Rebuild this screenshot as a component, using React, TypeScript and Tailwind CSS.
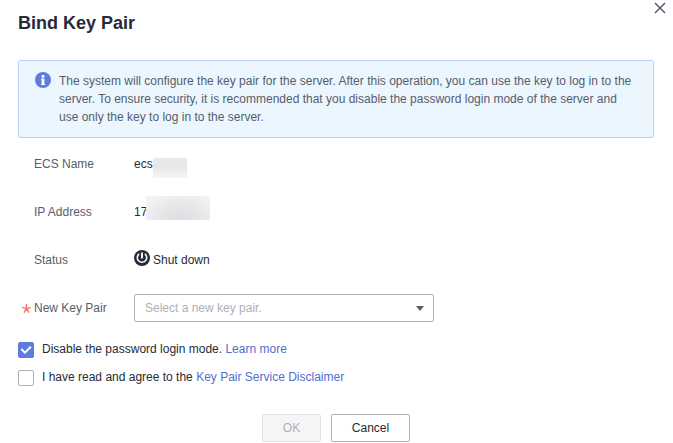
import type { ReactNode } from 'react';

function CloseIcon() {
  return (
    <svg width="12" height="12" viewBox="0 0 12 12" fill="none" stroke="#575d6c" strokeWidth="1.5">
      <path d="M1 1 11 11M11 1 1 11" />
    </svg>
  );
}

function InfoIcon() {
  return (
    <svg className="shrink-0" width="16" height="16" viewBox="0 0 16 16">
      <circle cx="8" cy="8" r="8" fill="#5e7ce0" />
      <circle cx="8" cy="4.2" r="1.5" fill="#fff" />
      <path d="M6 6.5H9.4V12H10V13H6V12H6.6V7.5H6Z" fill="#fff" />
    </svg>
  );
}

function PowerIcon() {
  return (
    <svg className="shrink-0" width="16" height="16" viewBox="0 0 16 16" fill="none">
      <circle cx="8" cy="8" r="8" fill="#252b3a" />
      <path d="M5.2 3.8A4.7 4.7 0 1 0 10.8 3.8" stroke="#fff" strokeWidth="1.5" />
      <path d="M8 2.6V8.4" stroke="#fff" strokeWidth="1.9" />
    </svg>
  );
}

function Row({ label, required, children }: { label: string; required?: boolean; children: ReactNode }) {
  return (
    <div className="flex h-12 items-center">
      <div className="flex w-[116px] shrink-0 items-center text-[#575d6c]">
        <span className="flex w-4 justify-end pr-[3.5px]">
          {required && (
            <svg width="9" height="9" viewBox="0 0 9 9" stroke="#f66f6a" strokeWidth="1.4" fill="none">
              <path d="M4.5 0V4.8M0.3 3.4 4.5 4.8 8.7 3.4M1.9 8.6 4.5 4.8 7.1 8.6" />
            </svg>
          )}
        </span>
        {label}
      </div>
      {children}
    </div>
  );
}

function Check({ checked, children }: { checked?: boolean; children: ReactNode }) {
  return (
    <label className="flex h-7 items-center">
      <span className={`mt-0.5 mr-2 flex size-4 shrink-0 items-center justify-center rounded-xs border ${checked ? 'border-[#5e7ce0] bg-[#5e7ce0]' : 'border-[#adb0b8] bg-white'}`}>
        {checked && (
          <svg className="shrink-0" width="12" height="10" viewBox="0 0 12 10" fill="none" stroke="#fff" strokeWidth="2">
            <path d="M1.3 4 4.9 7.7 10.9 1.7" />
          </svg>
        )}
      </span>
      <span>{children}</span>
    </label>
  );
}

export default function App() {
  return (
    <div className="h-[443px] w-[673px] overflow-hidden bg-white pr-[19px] pl-[18px] font-['Liberation_Sans',Arial,sans-serif] text-xs leading-[18px] text-[#252b3a]">
      <header className="flex h-[60px] justify-between">
        <h1 className="mt-[11px] text-lg leading-6 font-bold">Bind Key Pair</h1>
        <button className="mt-0.5 -mr-3 h-3"><CloseIcon /></button>
      </header>

      <div className="flex h-[78px] gap-2 rounded-xs border border-[#beccfa] bg-[#ebf6ff] py-[11px] pr-4 pl-4 text-[#575d6c]">
        <InfoIcon />
        <p className="whitespace-nowrap">
          The system will configure the key pair for the server. After this operation, you can use the key to log in to the<br />
          server. To ensure security, it is recommended that you disable the password login mode of the server and<br />
          use only the key to log in to the server.
        </p>
      </div>

      <div className="mt-0.5">
        <Row label="ECS Name">
          <span>ecs</span>
          <span className="mt-2 h-5 w-[34px] bg-linear-to-b from-[#e9eaeb] via-[#e7e8e9] to-[#f5f5f5]" />
        </Row>
        <Row label="IP Address">
          <span className="w-3 overflow-hidden">17</span>
          <span className="mb-2 h-6 w-16 bg-[radial-gradient(ellipse_at_55%_95%,#dddee1_0%,#e5e6e8_40%,#f0f0f1_75%,#f6f6f6_100%)]" />
        </Row>
        <Row label="Status">
          <span className="mr-[3px] mb-1"><PowerIcon /></span>
          <span>Shut down</span>
        </Row>
        <Row label="New Key Pair" required>
          <div className="flex h-7 w-[300px] items-center justify-between rounded-xs border border-[#adb0b8] px-2.5 text-[#adb0b8]">
            Select a new key pair.
            <svg className="-mr-[5px] shrink-0" width="16" height="5" viewBox="0 0 16 5">
              <path d="M4 0H12L8 5Z" fill="#575d6c" />
            </svg>
          </div>
        </Row>
      </div>

      <div className="mt-[3px]">
        <Check checked>
          Disable the password login mode. <a className="text-[#526ecc]">Learn more</a>
        </Check>
        <Check>
          I have read and agree to the <a className="text-[#526ecc]">Key Pair Service Disclaimer</a>
        </Check>
      </div>

      <div className="mt-[23px] ml-[244px] flex gap-2.5">
        <button className="h-7 w-[59px] rounded-xs border border-[#dfe1e6] bg-[#f5f5f6] text-[#adb0b8]">OK</button>
        <button className="h-7 w-[79px] rounded-xs border border-[#adb0b8] bg-white">Cancel</button>
      </div>
    </div>
  );
}
